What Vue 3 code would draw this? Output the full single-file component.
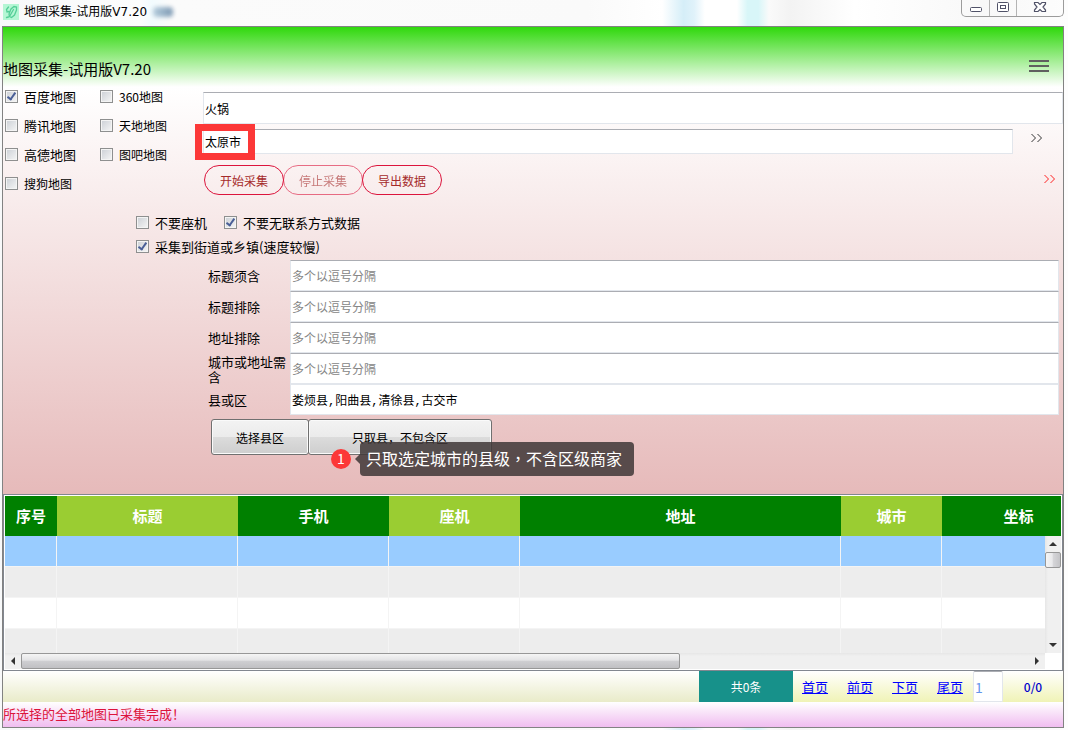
<script setup>
import { ref, reactive } from 'vue'

const sources = reactive([
  { id: 'baidu', label: '百度地图', on: true, small: false },
  { id: 's360', label: '360地图', on: false, small: true },
  { id: 'tencent', label: '腾讯地图', on: false, small: false },
  { id: 'tianditu', label: '天地地图', on: false, small: true },
  { id: 'gaode', label: '高德地图', on: false, small: false },
  { id: 'mapbar', label: '图吧地图', on: false, small: true },
  { id: 'sogou', label: '搜狗地图', on: false, small: true }
])

const keyword = ref('火锅')
const city = ref('太原市')
const noLandline = ref(false)
const needContact = ref(true)
const streetLevel = ref(true)
const page = ref('1')

const hint = '多个以逗号分隔'
const filters = reactive([
  { id: 'titleHas', label: '标题须含', value: '', hint },
  { id: 'titleNot', label: '标题排除', value: '', hint },
  { id: 'addrNot', label: '地址排除', value: '', hint },
  { id: 'addrHas', label: '城市或地址需含', value: '', hint },
  { id: 'county', label: '县或区', value: '娄烦县,阳曲县,清徐县,古交市', hint: '' }
])

const columns = ['序号', '标题', '手机', '座机', '地址', '城市', '坐标']
const links = ['首页', '前页', '下页', '尾页']
</script>

<template>
  <div class="desktop">
    <header class="titlebar">
      <svg class="logo" width="16" height="16" viewBox="0 0 16 16" aria-hidden="true">
        <rect width="16" height="16" fill="#b4f6d4" />
        <path d="M5.500 3L3.500 5.500L4 8L6 7.500M6.500 12.500L6 10L8 5L11 2.500L13.500 3L13.500 6L11.500 11L8.500 13.500L6.500 12.500L10.500 5.500M3.500 13.500L5.500 13" fill="none" stroke="#55ce98" stroke-width="1.300" stroke-linecap="round" />
      </svg>
      <span class="caption">地图采集-试用版V7.20</span>
      <span class="smudge"></span>
      <div class="controls">
        <button type="button" aria-label="最小化">
          <svg width="14" height="14" viewBox="0 0 14 14"><rect x="1.500" y="7.500" width="11" height="4" rx="1" fill="#fff" stroke="#505268" /></svg>
        </button>
        <button type="button" aria-label="最大化">
          <svg width="14" height="14" viewBox="0 0 14 14"><rect x="1.500" y="2.500" width="11" height="9" rx="1" fill="#fff" stroke="#505268" /><rect x="4.500" y="5.500" width="5" height="3" fill="#fff" stroke="#505268" /></svg>
        </button>
        <button type="button" class="close" aria-label="关闭">
          <svg width="14" height="14" viewBox="0 0 14 14"><path d="M1.500 2.500h3.500l2 2l2-2h3.500v1.500l-2.500 3l2.500 3v1.500h-3.500l-2-2l-2 2h-3.500v-1.500l2.500-3l-2.500-3z" fill="#fff" stroke="#505268" stroke-width="1.200" /></svg>
        </button>
      </div>
    </header>

    <main class="frame">
      <div class="banner">
        <h1>地图采集-试用版V7.20</h1>
        <button type="button" class="burger" aria-label="菜单"><i></i><i></i><i></i></button>
      </div>

      <section class="panel">
        <div class="search">
          <div class="sources">
            <label v-for="s in sources" :key="s.id" :class="{ small: s.small }">
              <input v-model="s.on" type="checkbox" /><span>{{ s.label }}</span>
            </label>
          </div>
          <div class="fields">
            <input v-model="keyword" class="keyword" type="text" aria-label="关键词" />
            <div class="cityrow">
              <input v-model="city" type="text" aria-label="城市" />
              <button type="button" class="more" aria-label="选择城市">
                <svg width="14" height="10" viewBox="0 0 14 10"><path d="M1.500 1l4 4l-4 4M7.500 1l4 4l-4 4" /></svg>
              </button>
              <span class="mark"></span>
            </div>
            <div class="actions">
              <button type="button" class="pill">开始采集</button>
              <button type="button" class="pill" disabled>停止采集</button>
              <button type="button" class="pill">导出数据</button>
              <button type="button" class="more red" aria-label="展开">
                <svg width="14" height="10" viewBox="0 0 14 10"><path d="M1.500 1l4 4l-4 4M7.500 1l4 4l-4 4" /></svg>
              </button>
            </div>
          </div>
        </div>

        <div class="options">
          <div class="optrow">
            <label><input v-model="noLandline" type="checkbox" /><span>不要座机</span></label>
            <label><input v-model="needContact" type="checkbox" /><span>不要无联系方式数据</span></label>
          </div>
          <div class="optrow">
            <label><input v-model="streetLevel" type="checkbox" /><span>采集到街道或乡镇(速度较慢)</span></label>
          </div>
        </div>

        <div class="filters">
          <div v-for="f in filters" :key="f.id" class="filter">
            <label :for="f.id">{{ f.label }}</label>
            <input :id="f.id" v-model="f.value" type="text" :placeholder="f.hint" />
          </div>
        </div>

        <div class="county">
          <button type="button" class="btn">选择县区</button>
          <div class="only">
            <button type="button" class="btn wide">只取县，不包含区</button>
            <span class="badge">1</span>
            <div class="tip" role="tooltip">只取选定城市的县级，不含区级商家</div>
          </div>
        </div>
      </section>

      <section class="grid">
        <div class="view">
          <table>
            <colgroup><col v-for="(c, i) in columns" :key="c" :class="'c' + i" /></colgroup>
            <thead>
              <tr><th v-for="c in columns" :key="c" scope="col">{{ c }}</th></tr>
            </thead>
            <tbody>
              <tr v-for="r in 4" :key="r"><td v-for="c in columns" :key="c"></td></tr>
            </tbody>
          </table>
          <div class="vbar">
            <button type="button" aria-label="向上"><svg width="8" height="4" viewBox="0 0 8 4"><path d="M0 4L4 0L8 4z" /></svg></button>
            <span class="vthumb"></span>
            <button type="button" class="end" aria-label="向下"><svg width="8" height="4" viewBox="0 0 8 4"><path d="M0 0L4 4L8 0z" /></svg></button>
          </div>
        </div>
        <div class="hbar">
          <button type="button" aria-label="向左"><svg width="4" height="8" viewBox="0 0 4 8"><path d="M4 0L0 4L4 8z" /></svg></button>
          <span class="track"><span class="hthumb"></span></span>
          <button type="button" aria-label="向右"><svg width="4" height="8" viewBox="0 0 4 8"><path d="M0 0L4 4L0 8z" /></svg></button>
        </div>
      </section>

      <nav class="pager">
        <span class="total">共0条</span>
        <div class="pages">
          <a v-for="l in links" :key="l" href="#">{{ l }}</a>
          <input v-model="page" type="text" aria-label="页码" />
          <span class="ratio">0/0</span>
        </div>
      </nav>

      <footer class="status">所选择的全部地图已采集完成！</footer>
    </main>
  </div>
</template>

<style>
body {
  margin: 0;
  background: #fcfcfc;
}
</style>

<style scoped>
* {
  box-sizing: border-box;
}
.desktop {
  height: 100vh;
  display: flex;
  flex-direction: column;
  padding: 0 4px 2px 2px;
  overflow: hidden;
  font-family: "Noto Sans CJK SC", sans-serif;
  font-size: 12px;
  color: #000;
  background: linear-gradient(90deg, #f8f9fa 0, #fcfdfd 140px, #f2fbfe 152px, #fbfbfb 170px, #fafafa 55%, #fff 62%, #d5eef8 64%, #e0f2fa 65%, #fff 66%, #fff 69%, #d8f6f8 70%, #d8f6f8 71%, #fafafa 72%, #f3f3f3 74%, #fff 80%, #f8f8f8 92%, #fdfdfd 100%);
}
button,
input {
  font-family: inherit;
  font-size: 12px;
  color: inherit;
  margin: 0;
}
button {
  padding: 0;
  border: 0;
  background: none;
}

.titlebar {
  flex: none;
  height: 26px;
  display: flex;
  align-items: center;
  padding: 0 0 2px 1px;
}
.caption {
  margin-left: 5px;
  font-family: "DejaVu Sans", "Noto Sans CJK SC", sans-serif;
  line-height: 16px;
}
.smudge {
  width: 20px;
  height: 10px;
  margin-left: 6px;
  border-radius: 4px;
  background: linear-gradient(90deg, #b5cddd, #7f9ab4);
  filter: blur(2px);
}
.controls {
  display: flex;
  align-self: flex-start;
  height: 17px;
  margin-left: auto;
  border: 1px solid #9c9c9c;
  border-top: 0;
  border-radius: 0 0 5px 5px;
}
.controls button {
  width: 27px;
  display: flex;
  align-items: center;
  justify-content: center;
  padding-bottom: 2px;
}
.controls button + button {
  border-left: 1px solid #b4b4b4;
}
.controls .close {
  width: 47px;
}

.frame {
  flex: 1;
  min-height: 0;
  display: flex;
  flex-direction: column;
  border: 1px solid #828282;
}
.banner {
  flex: none;
  height: 60px;
  display: flex;
  align-items: flex-end;
  justify-content: space-between;
  padding: 0 14px 7px 0;
  background: linear-gradient(#2fd80c, #fff);
}
h1 {
  margin: 0;
  font-size: 15px;
  font-weight: 400;
  line-height: 22px;
}
.burger {
  width: 20px;
  height: 20px;
  display: grid;
  align-content: start;
  gap: 3px;
}
.burger i {
  height: 2px;
  background: #5f5f5f;
}

.panel {
  flex: none;
  padding-bottom: 39px;
  background: linear-gradient(#fff, #e6baba);
}
.search {
  display: flex;
}
.sources {
  flex: none;
  width: 200px;
  display: grid;
  grid-template-columns: 95px 1fr;
  align-content: start;
  gap: 9px 0;
  padding-left: 2px;
}
.sources label,
.optrow label {
  display: flex;
  align-items: center;
  gap: 6px;
  font-size: 13px;
  line-height: 20px;
}
.sources .small {
  font-size: 12px;
}
input[type="checkbox"] {
  appearance: none;
  flex: none;
  width: 13px;
  height: 13px;
  margin-bottom: 1px;
  border: 1px solid #8e8f8f;
  background: linear-gradient(135deg, #cbcfd5, #f6f6f6);
  box-shadow: inset 0 0 0 1px #f4f4f4;
}
input[type="checkbox"]:checked::after {
  content: "";
  display: block;
  width: 3px;
  height: 7px;
  margin: 0 0 0 3px;
  border: solid #4a5f97;
  border-width: 0 2px 2px 0;
  box-sizing: content-box;
  transform: rotate(35deg);
}
input[type="text"] {
  min-width: 0;
  padding: 0 1px;
  border: 1px solid #e2e6ec;
  border-top-color: #abadb3;
  background: #fff;
  outline: 0;
}
.fields {
  flex: 1;
  min-width: 0;
  padding-top: 5px;
}
.fields .keyword {
  display: block;
  width: 100%;
  height: 32px;
}
.cityrow {
  position: relative;
  display: flex;
  align-items: center;
  margin-top: 5px;
  padding-right: 19px;
}
.cityrow input {
  flex: 1;
  height: 25px;
  margin-right: 17px;
}
.more {
  display: flex;
}
.more path {
  fill: none;
  stroke: #333;
}
.more.red {
  margin: 0 6px 2px auto;
}
.more.red path {
  stroke: #f22;
}
.cityrow .more {
  margin-bottom: 8px;
}
.mark {
  position: absolute;
  left: -8px;
  top: -5px;
  width: 60px;
  height: 36px;
  border: 7px solid #fc3838;
  pointer-events: none;
}
.actions {
  display: flex;
  align-items: center;
  margin-top: 11px;
  padding-left: 1px;
}
.pill {
  width: 80px;
  height: 30px;
  margin-right: -1px;
  border: 1px solid #dc143c;
  border-radius: 15px;
  color: #a52a2a;
}
.pill:disabled {
  opacity: 0.6;
}

.options {
  display: grid;
  gap: 4px;
  padding: 18px 0 0 133px;
}
.optrow {
  display: flex;
  gap: 17px;
}
.filters {
  padding: 3px 4px 0 205px;
}
.filter {
  display: grid;
  grid-template-columns: 82px 1fr;
  align-items: center;
}
.filter label {
  font-size: 13px;
  line-height: 15px;
}
.filter input {
  height: 31px;
}
.filter:last-child input {
  font-family: "Liberation Mono", "Noto Sans CJK SC", monospace;
  border-top-color: #e2e6ec;
}
.filter input::placeholder {
  color: #858585;
  opacity: 1;
}
.county {
  display: flex;
  padding: 4px 0 0 208px;
}
.btn {
  width: 98px;
  height: 36px;
  border: 1px solid #707070;
  border-radius: 3px;
  background: linear-gradient(#f3f3f3, #ebebeb 50%, #dcdcdc 50%, #cecece);
  box-shadow: inset 0 0 0 1px #fafafa;
}
.only {
  position: relative;
  margin-left: -1px;
}
.btn.wide {
  width: 184px;
}
.badge {
  position: absolute;
  left: 23px;
  top: 30px;
  width: 20px;
  height: 20px;
  border-radius: 50%;
  background: #fc3838;
  color: #fff;
  font-size: 14px;
  line-height: 19px;
  text-align: center;
}
.tip {
  position: absolute;
  left: 52px;
  top: 23px;
  padding: 0 12px 1px 6px;
  border-radius: 4px;
  background: rgba(64, 56, 56, 0.86);
  color: #fff;
  font-family: "Noto Sans CJK TC", "Noto Sans CJK SC", sans-serif;
  font-size: 16px;
  line-height: 33px;
  white-space: nowrap;
}
.tip::before {
  content: "";
  position: absolute;
  left: -5px;
  top: 12px;
  border: solid transparent;
  border-width: 5px 5px 5px 0;
  border-right-color: rgba(64, 56, 56, 0.86);
}

.grid {
  flex: 1;
  min-height: 0;
  display: flex;
  flex-direction: column;
  padding: 1px;
  border: 1px solid #828790;
  background: #fff;
}
.view {
  position: relative;
  flex: 1;
  min-height: 0;
  overflow: hidden;
}
table {
  width: 1090px;
  min-width: 100%;
  table-layout: fixed;
  border-collapse: separate;
  border-spacing: 0;
}
.c0 { width: 52px; }
.c1 { width: 181px; }
.c2 { width: 151px; }
.c3 { width: 131px; }
.c4 { width: 321px; }
.c5 { width: 101px; }
th {
  height: 40px;
  padding: 0 0 2px;
  background: #008000;
  color: #fff;
  font-size: 15px;
  font-weight: 700;
}
th:nth-child(2),
th:nth-child(4),
th:nth-child(6) {
  background: #9acd32;
}
td {
  height: 31px;
  padding: 0;
  border-right: 1px solid #f4f4f4;
  border-bottom: 1px solid #f4f4f4;
}
tbody tr:nth-child(even) {
  background: #ededed;
}
tbody tr:first-child {
  background: #99ccff;
}
.vbar {
  position: absolute;
  top: 40px;
  right: 0;
  bottom: 0;
  width: 16px;
  display: flex;
  flex-direction: column;
  background: linear-gradient(90deg, #e6e6e6, #f0f0f0 3px);
}
.vbar button,
.hbar button {
  flex: none;
  width: 16px;
  height: 16px;
  display: flex;
  align-items: center;
  justify-content: center;
}
.vbar path,
.hbar path {
  fill: #333;
}
.vthumb {
  height: 16px;
  border: 1px solid #979797;
  border-radius: 2px;
  background: linear-gradient(90deg, #f5f5f5, #e9e9eb 45%, #d6d6d9 50%, #c4c4c7);
}
.vbar .end {
  margin-top: auto;
}
.hbar {
  flex: none;
  display: flex;
  height: 16px;
  margin-right: 16px;
  background: linear-gradient(#e6e6e6, #f0f0f0 3px);
}
.track {
  flex: 1;
  display: flex;
}
.hthumb {
  width: 65.4%;
  border: 1px solid #979797;
  border-radius: 2px;
  background: linear-gradient(#f5f5f5, #e3e3e5 45%, #cfcfd2 50%, #c0c0c3);
}

.pager {
  flex: none;
  height: 31px;
  display: flex;
  justify-content: flex-end;
  background: linear-gradient(#fff, #e9ebc9);
}
.total {
  width: 94px;
  background: #17918a;
  color: #fff;
  line-height: 31px;
  text-align: center;
}
.pages {
  display: flex;
  align-items: center;
  padding-left: 9px;
  background: linear-gradient(#fff, #f0f3b6);
}
.pages a {
  width: 45px;
  color: #00f;
  font-size: 13px;
}
.pages input {
  width: 30px;
  height: 31px;
  margin-left: -9px;
  border-radius: 2px;
  color: #6495ed;
  font-size: 14px;
}
.ratio {
  width: 60px;
  color: #00c;
  font-weight: 500;
  text-align: center;
}
.status {
  flex: none;
  height: 25px;
  background: linear-gradient(#fff, #f0bdf0);
  color: #dc143c;
  font-size: 13px;
  line-height: 24px;
}
</style>
